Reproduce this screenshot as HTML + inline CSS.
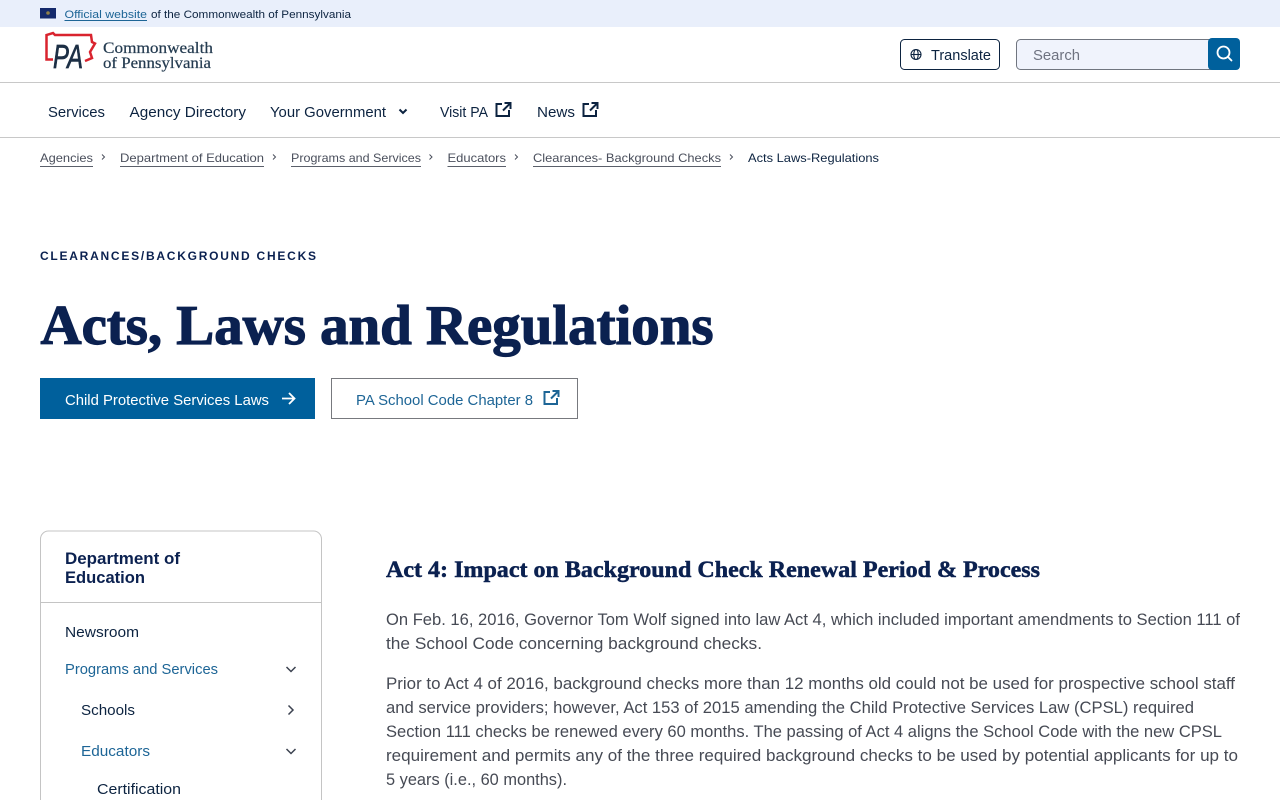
<!DOCTYPE html>
<html lang="en"><head><meta charset="utf-8"><title>Acts, Laws and Regulations</title>
<style>
html,body{margin:0;padding:0;background:#fff;width:1280px;height:800px;overflow:hidden}
svg{display:block}
text{font-family:"Liberation Sans",sans-serif;white-space:pre}
.top{font-size:11px;fill:#0c2340}
.nav{font-size:15px;fill:#0c2340}
.bc{font-size:12px;fill:#4a4f5c}
.side{font-size:15px;fill:#0c2340}
.blue{fill:#1d6596}
.p{font-size:17px;fill:#464a54}
.ic{fill:none;stroke-linejoin:miter}
</style></head><body>
<svg width="1280" height="800" viewBox="0 0 1280 800" xmlns="http://www.w3.org/2000/svg">
<rect width="1280" height="800" fill="#fff"/>
<!-- top bar -->
<rect width="1280" height="27" fill="#e9effb"/>
<rect x="40" y="8" width="16" height="10.500" fill="#14296b"/>
<circle cx="48" cy="13" r="1.800" fill="#8f8048"/>
<text class="top" x="64.500" y="18" style="fill:#1d6596" textLength="82.500" lengthAdjust="spacingAndGlyphs">Official website</text>
<rect x="64.500" y="20" width="82.500" height="1" fill="#1d6596"/>
<text class="top" x="151" y="18" textLength="200" lengthAdjust="spacingAndGlyphs">of the Commonwealth of Pennsylvania</text>
<!-- logo -->
<path d="M53 59.500H46.500V35L53 33 55 35H91L92 42 95 43.500 90 52 92 58 85 61" fill="none" stroke="#d9232e" stroke-width="2.500"/>
<text x="53" y="68" font-size="33" font-style="italic" fill="#1c2f45" stroke="#1c2f45" stroke-width=".7" textLength="30" lengthAdjust="spacingAndGlyphs">PA</text>
<text x="103" y="53" font-size="15.500" fill="#243b50" stroke="#243b50" stroke-width=".2" style="font-family:'Liberation Serif',serif" textLength="110" lengthAdjust="spacingAndGlyphs">Commonwealth</text>
<text x="103" y="68" font-size="15.500" fill="#243b50" stroke="#243b50" stroke-width=".2" style="font-family:'Liberation Serif',serif" textLength="108" lengthAdjust="spacingAndGlyphs">of Pennsylvania</text>
<!-- header right -->
<rect x="900.500" y="39.500" width="99" height="30" rx="4" fill="#fff" stroke="#0c2340"/>
<g class="ic" stroke="#0c2340" stroke-width="1.100"><circle cx="916" cy="54.500" r="5"/><ellipse cx="916" cy="54.500" rx="2.200" ry="5"/><path d="M911 54.500H921"/></g>
<text x="931" y="60" font-size="15" fill="#0c2340" textLength="60" lengthAdjust="spacingAndGlyphs">Translate</text>
<rect x="1016.500" y="39.500" width="200" height="30" rx="4" fill="#f0f3fc" stroke="#70757f"/>
<text x="1033" y="60" font-size="15" fill="#6e7280" textLength="47" lengthAdjust="spacingAndGlyphs">Search</text>
<rect x="1208" y="38" width="32" height="32" rx="4" fill="#00609c"/>
<g class="ic" stroke="#fff" stroke-width="1.800" stroke-linecap="round"><circle cx="1223.500" cy="52.500" r="6"/><path d="M1228 57L1231.500 60.500"/></g>
<rect y="82" width="1280" height="1" fill="#c8c8c8"/>
<!-- nav -->
<text class="nav" x="48" y="117" textLength="57" lengthAdjust="spacingAndGlyphs">Services</text>
<text class="nav" x="129.500" y="117" textLength="116.500" lengthAdjust="spacingAndGlyphs">Agency Directory</text>
<text class="nav" x="270" y="117" textLength="116" lengthAdjust="spacingAndGlyphs">Your Government</text>
<path class="ic" stroke="#0c2340" stroke-width="2" d="M399.500 109.500L403 113 406.500 109.500"/>
<text class="nav" x="440" y="117" textLength="48" lengthAdjust="spacingAndGlyphs">Visit PA</text>
<g class="ic" stroke="#0c2340" stroke-width="2"><path d="M502 104H496.500V116H509V110"/><path d="M503 110.500L510 103.500M504.500 103H510.500V109"/></g>
<text class="nav" x="537" y="117" textLength="38" lengthAdjust="spacingAndGlyphs">News</text>
<g class="ic" stroke="#0c2340" stroke-width="2"><path d="M589 104H583.500V116H596V110"/><path d="M590 110.500L597 103.500M591.500 103H597.500V109"/></g>
<rect y="137" width="1280" height="1" fill="#c8c8c8"/>
<!-- breadcrumb -->
<g>
<text class="bc" x="40" y="162" textLength="53" lengthAdjust="spacingAndGlyphs">Agencies</text><rect x="40" y="166" width="53" height="1" fill="#5a5f6a"/>
<text class="bc" x="120" y="162" textLength="144" lengthAdjust="spacingAndGlyphs">Department of Education</text><rect x="120" y="166" width="144" height="1" fill="#5a5f6a"/>
<text class="bc" x="291" y="162" textLength="130" lengthAdjust="spacingAndGlyphs">Programs and Services</text><rect x="291" y="166" width="130" height="1" fill="#5a5f6a"/>
<text class="bc" x="447.500" y="162" textLength="58.500" lengthAdjust="spacingAndGlyphs">Educators</text><rect x="447.500" y="166" width="58.500" height="1" fill="#5a5f6a"/>
<text class="bc" x="533" y="162" textLength="188" lengthAdjust="spacingAndGlyphs">Clearances- Background Checks</text><rect x="533" y="166" width="188" height="1" fill="#5a5f6a"/>
<text x="748" y="162" font-size="12" fill="#0c2340" textLength="131" lengthAdjust="spacingAndGlyphs">Acts Laws-Regulations</text>
<g class="ic" stroke="#4a4f5c" stroke-width="1"><path d="M102 154.500L104.500 157 102 159.500"/><path d="M273 154.500L275.500 157 273 159.500"/><path d="M429.500 154.500L432 157 429.500 159.500"/><path d="M515 154.500L517.500 157 515 159.500"/><path d="M730 154.500L732.500 157 730 159.500"/></g>
</g>
<!-- hero -->
<text x="40" y="260" font-size="12" font-weight="700" fill="#0b2150" textLength="276" lengthAdjust="spacing">CLEARANCES/BACKGROUND CHECKS</text>
<text x="40.500" y="344" font-size="56" font-weight="700" fill="#0b2150" stroke="#0b2150" stroke-width="1.200" style="font-family:'Liberation Serif',serif" textLength="673" lengthAdjust="spacingAndGlyphs">Acts, Laws and Regulations</text>
<rect x="40" y="378" width="275" height="41" fill="#00609c"/>
<text x="65" y="405" font-size="15" fill="#fff" textLength="204" lengthAdjust="spacingAndGlyphs">Child Protective Services Laws</text>
<path class="ic" stroke="#fff" stroke-width="1.800" d="M282 398.500H294M289 393L294.500 398.500 289 404"/>
<rect x="331.500" y="378.500" width="246" height="40" fill="#fff" stroke="#77797e"/>
<text x="356" y="405" font-size="15" fill="#1d6596" textLength="177" lengthAdjust="spacingAndGlyphs">PA School Code Chapter 8</text>
<g class="ic" stroke="#1d6596" stroke-width="2"><path d="M550 392H544.500V404H557V398"/><path d="M551 398.500L558 391.500M552.500 391H558.500V397"/></g>
<!-- sidebar -->
<path d="M40.500 800V539a8 8 0 0 1 8-8H313.500a8 8 0 0 1 8 8V800" fill="none" stroke="#c4c4c4"/>
<rect x="41" y="602" width="280" height="1" fill="#c4c4c4"/>
<text x="65" y="564" font-size="17" font-weight="700" fill="#0b2150" textLength="115" lengthAdjust="spacingAndGlyphs">Department of</text>
<text x="65" y="583" font-size="17" font-weight="700" fill="#0b2150" textLength="80" lengthAdjust="spacingAndGlyphs">Education</text>
<text class="side" x="65" y="637" textLength="74" lengthAdjust="spacingAndGlyphs">Newsroom</text>
<text class="side blue" x="65" y="674" textLength="153" lengthAdjust="spacingAndGlyphs">Programs and Services</text>
<text class="side" x="81" y="715" textLength="54" lengthAdjust="spacingAndGlyphs">Schools</text>
<text class="side blue" x="81" y="756" textLength="69" lengthAdjust="spacingAndGlyphs">Educators</text>
<text class="side" x="97" y="794" textLength="84" lengthAdjust="spacingAndGlyphs">Certification</text>
<g class="ic" stroke="#3c4250" stroke-width="1.500"><path d="M286.500 667L291 671.500 295.500 667"/><path d="M288.500 705.500L293 710 288.500 714.500"/><path d="M286.500 749L291 753.500 295.500 749"/></g>
<!-- content -->
<text x="386" y="577" font-size="23.500" font-weight="700" fill="#0b2150" stroke="#0b2150" stroke-width=".5" style="font-family:'Liberation Serif',serif" textLength="654" lengthAdjust="spacingAndGlyphs">Act 4: Impact on Background Check Renewal Period &amp; Process</text>
<text class="p" x="386" y="625" textLength="854" lengthAdjust="spacingAndGlyphs">On Feb. 16, 2016, Governor Tom Wolf signed into law Act 4, which included important amendments to Section 111 of</text>
<text class="p" x="386" y="649" textLength="376" lengthAdjust="spacingAndGlyphs">the School Code concerning background checks.</text>
<text class="p" x="386" y="689" textLength="849" lengthAdjust="spacingAndGlyphs">Prior to Act 4 of 2016, background checks more than 12 months old could not be used for prospective school staff</text>
<text class="p" x="386" y="713" textLength="808" lengthAdjust="spacingAndGlyphs">and service providers; however, Act 153 of 2015 amending the Child Protective Services Law (CPSL) required</text>
<text class="p" x="386" y="737" textLength="836" lengthAdjust="spacingAndGlyphs">Section 111 checks be renewed every 60 months. The passing of Act 4 aligns the School Code with the new CPSL</text>
<text class="p" x="386" y="761" textLength="852" lengthAdjust="spacingAndGlyphs">requirement and permits any of the three required background checks to be used by potential applicants for up to</text>
<text class="p" x="386" y="785" textLength="181" lengthAdjust="spacingAndGlyphs">5 years (i.e., 60 months).</text>
</svg>
</body></html>
